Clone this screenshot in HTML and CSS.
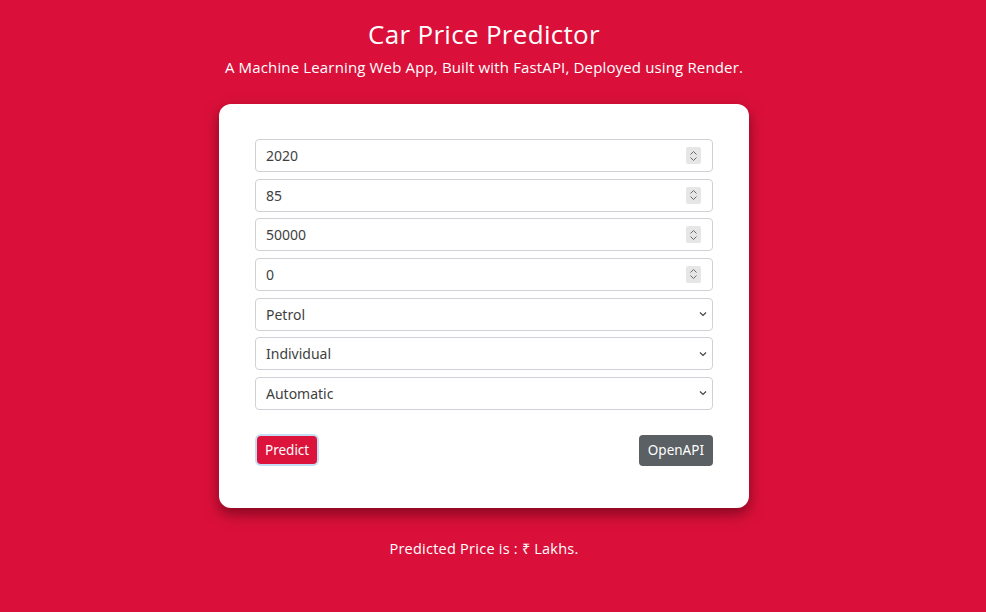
FILE: index.html
```html
<!DOCTYPE html>
<html>
<head>
<meta charset="utf-8">
<link rel="stylesheet" href="styles.css">
</head>
<body>
<header class="hero">
  <h1 class="title">Car Price Predictor</h1>
  <p class="subtitle">A Machine Learning Web App, Built with FastAPI, Deployed using Render.</p>
</header>
<main class="card">
  <div class="fields">
    <div class="field"><span class="val">2020</span><span class="spin"><svg width="9" height="12" viewBox="0 0 9 12"><path d="M1.5 4.5 L4.5 1.5 L7.5 4.5 M1.5 7.5 L4.5 10.5 L7.5 7.5" fill="none" stroke="#6b6b6b" stroke-width="1"/></svg></span></div>
    <div class="field"><span class="val">85</span><span class="spin"><svg width="9" height="12" viewBox="0 0 9 12"><path d="M1.5 4.5 L4.5 1.5 L7.5 4.5 M1.5 7.5 L4.5 10.5 L7.5 7.5" fill="none" stroke="#6b6b6b" stroke-width="1"/></svg></span></div>
    <div class="field"><span class="val">50000</span><span class="spin"><svg width="9" height="12" viewBox="0 0 9 12"><path d="M1.5 4.5 L4.5 1.5 L7.5 4.5 M1.5 7.5 L4.5 10.5 L7.5 7.5" fill="none" stroke="#6b6b6b" stroke-width="1"/></svg></span></div>
    <div class="field"><span class="val">0</span><span class="spin"><svg width="9" height="12" viewBox="0 0 9 12"><path d="M1.5 4.5 L4.5 1.5 L7.5 4.5 M1.5 7.5 L4.5 10.5 L7.5 7.5" fill="none" stroke="#6b6b6b" stroke-width="1"/></svg></span></div>
    <div class="field select"><span class="val">Petrol</span><svg class="chev" width="8" height="6" viewBox="0 0 8 6"><path d="M1 1.5 L4 4.5 L7 1.5" fill="none" stroke="#444" stroke-width="1.2"/></svg></div>
    <div class="field select"><span class="val">Individual</span><svg class="chev" width="8" height="6" viewBox="0 0 8 6"><path d="M1 1.5 L4 4.5 L7 1.5" fill="none" stroke="#444" stroke-width="1.2"/></svg></div>
    <div class="field select"><span class="val">Automatic</span><svg class="chev" width="8" height="6" viewBox="0 0 8 6"><path d="M1 1.5 L4 4.5 L7 1.5" fill="none" stroke="#444" stroke-width="1.2"/></svg></div>
  </div>
  <div class="actions">
    <button class="btn btn-predict">Predict</button>
    <button class="btn btn-api">OpenAPI</button>
  </div>
</main>
<p class="result">Predicted Price is : ₹ Lakhs.</p>
</body>
</html>
```
FILE: styles.css
```css
html, body {
  margin: 0;
  padding: 0;
}
body {
  background: #da103a;
  width: 968px;
  height: 612px;
  overflow: hidden;
  font-family: "Noto Sans", "Open Sans", sans-serif;
  color: #fff;
}
.hero {
  text-align: center;
  padding-top: 18px;
}
.title {
  margin: 0;
  font-family: "Open Sans", sans-serif;
  font-weight: 400;
  font-size: 26px;
  line-height: 32px;
  letter-spacing: 0.3px;
}
.subtitle {
  margin: 8px 0 0;
  font-family: "Open Sans", sans-serif;
  font-size: 15px;
  line-height: 18px;
  letter-spacing: 0.15px;
}
.card {
  width: 458px;
  margin: 28px auto 0;
  background: #fff;
  border-radius: 12px;
  padding: 35px 36px 42px;
  box-shadow: 0 6px 14px rgba(60, 0, 10, 0.55);
}
.fields {
  display: flex;
  flex-direction: column;
  gap: 6.67px;
}
.field {
  display: flex;
  align-items: center;
  justify-content: space-between;
  height: 31px;
  border: 1px solid #cfd2d6;
  border-radius: 4px;
  padding: 0 11px 0 10px;
  color: #3f3f3f;
  font-family: "Noto Sans", "Open Sans", sans-serif;
  font-size: 14px;
}
.field.select {
  padding-right: 5px;
}
.spin {
  width: 15px;
  height: 17px;
  background: #e6e6e6;
  border-radius: 2px;
  display: flex;
  align-items: center;
  justify-content: center;
}
.chev {
  display: block;
}
.actions {
  display: flex;
  justify-content: space-between;
  align-items: center;
  margin-top: 25px;
}
.btn {
  border: none;
  border-radius: 4px;
  color: #fff;
  font-family: "Noto Sans", "Open Sans", sans-serif;
  font-size: 14px;
  height: 31px;
  padding: 0 9px;
  cursor: pointer;
}
.btn-predict {
  background: #dc143c;
  font-size: 13.5px;
  padding: 0 8px;
  height: 28px;
  box-shadow: 0 0 0 2px #c5dcf5;
  margin-left: 2px;
}
.btn-api {
  background: #5b6064;
  font-size: 13.5px;
}
.result {
  text-align: center;
  margin: 31px 0 0;
  font-family: "Open Sans", sans-serif;
  font-size: 14.5px;
  line-height: 20px;
  letter-spacing: 0.25px;
}
```
